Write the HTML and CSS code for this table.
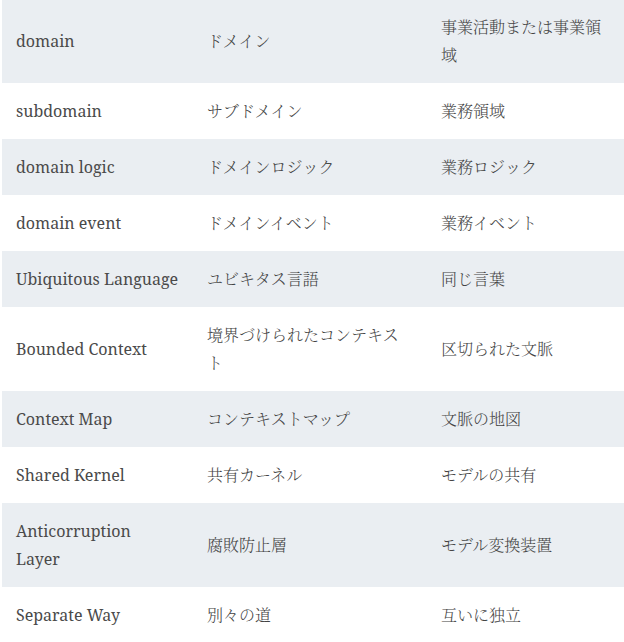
FILE: index.html
```html
<!DOCTYPE html>
<html lang="ja">
<head>
<meta charset="utf-8">
<link rel="stylesheet" href="styles.css">
</head>
<body>
<table class="terms">
  <colgroup>
    <col class="c1"><col class="c2"><col class="c3">
  </colgroup>
  <tbody>
    <tr><td class="en">domain</td><td class="ja">ドメイン</td><td class="ja">事業活動または事業領域</td></tr>
    <tr><td class="en">subdomain</td><td class="ja">サブドメイン</td><td class="ja">業務領域</td></tr>
    <tr><td class="en">domain logic</td><td class="ja">ドメインロジック</td><td class="ja">業務ロジック</td></tr>
    <tr><td class="en">domain event</td><td class="ja">ドメインイベント</td><td class="ja">業務イベント</td></tr>
    <tr><td class="en nowrap">Ubiquitous Language</td><td class="ja">ユビキタス言語</td><td class="ja">同じ言葉</td></tr>
    <tr><td class="en">Bounded Context</td><td class="ja">境界づけられたコンテキスト</td><td class="ja">区切られた文脈</td></tr>
    <tr><td class="en">Context Map</td><td class="ja">コンテキストマップ</td><td class="ja">文脈の地図</td></tr>
    <tr><td class="en">Shared Kernel</td><td class="ja">共有カーネル</td><td class="ja">モデルの共有</td></tr>
    <tr><td class="en">Anticorruption Layer</td><td class="ja">腐敗防止層</td><td class="ja">モデル変換装置</td></tr>
    <tr><td class="en">Separate Way</td><td class="ja">別々の道</td><td class="ja">互いに独立</td></tr>
  </tbody>
</table>
</body>
</html>
```
FILE: styles.css
```css
html, body {
  margin: 0;
  padding: 0;
  background: #ffffff;
}
.terms {
  margin: -1px 0 0 2px;
  width: 622px;
  table-layout: fixed;
  border-collapse: collapse;
  font-family: "Noto Serif", "DejaVu Serif", serif;
  font-size: 16px;
  line-height: 28px;
  color: #4a4a4a;
}
.c1 { width: 191px; }
.c2 { width: 234px; }
.c3 { width: 197px; }
.terms td {
  padding: 14px 14px;
  vertical-align: middle;
  text-align: left;
}
.terms td.en {
  padding-right: 15px;
}
.terms td.nowrap {
  white-space: nowrap;
}
.terms tr:nth-child(odd) td {
  background: #eaeef2;
}
.terms .ja {
  font-family: "Noto Serif CJK JP", "Noto Sans CJK JP", sans-serif;
  font-weight: 300;
  color: #444444;
}
```
